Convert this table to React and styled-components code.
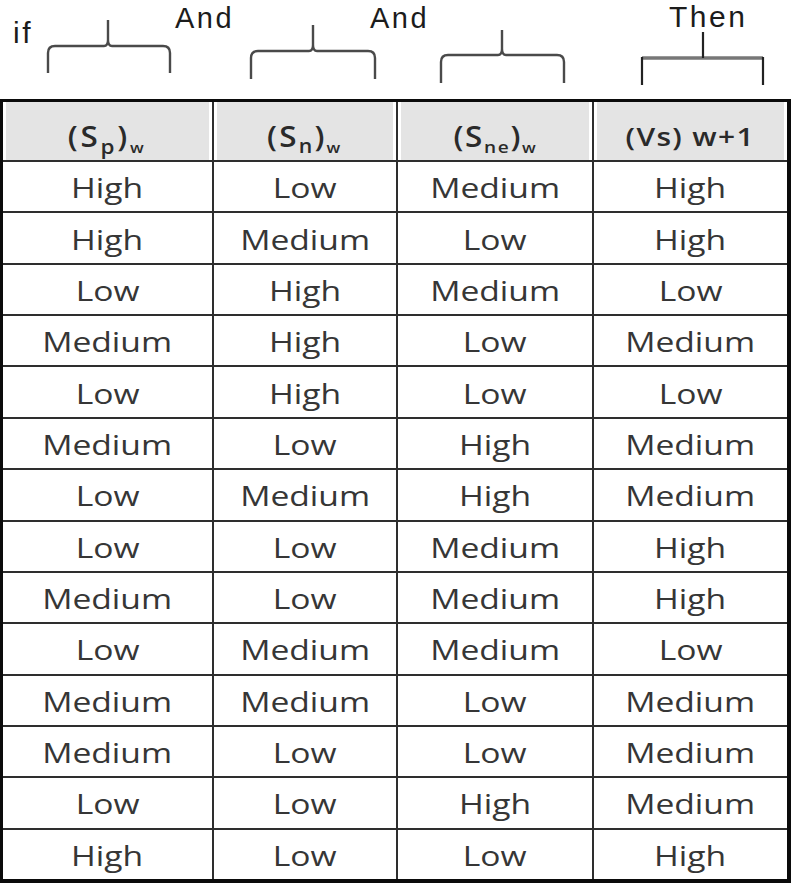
import styled, { createGlobalStyle } from 'styled-components';

const GlobalStyle = createGlobalStyle`
	body {
		margin: 0;
		background: #ffffff;
		font-family: 'Open Sans', 'Liberation Sans', sans-serif;
	}
`;

const ROWS = [
	['High', 'Low', 'Medium', 'High'],
	['High', 'Medium', 'Low', 'High'],
	['Low', 'High', 'Medium', 'Low'],
	['Medium', 'High', 'Low', 'Medium'],
	['Low', 'High', 'Low', 'Low'],
	['Medium', 'Low', 'High', 'Medium'],
	['Low', 'Medium', 'High', 'Medium'],
	['Low', 'Low', 'Medium', 'High'],
	['Medium', 'Low', 'Medium', 'High'],
	['Low', 'Medium', 'Medium', 'Low'],
	['Medium', 'Medium', 'Low', 'Medium'],
	['Medium', 'Low', 'Low', 'Medium'],
	['Low', 'Low', 'High', 'Medium'],
	['High', 'Low', 'Low', 'High'],
];

// curly braces over the first three columns: [left, right, top, tip, bottom, centre]
const BRACES = [
	[48, 170, 46, 20, 73, 108],
	[251, 375, 51, 25, 79, 313],
	[441, 564, 55, 30, 83, 502],
];

const LABELS = [
	{ text: 'if', x: 13, y: 16, size: 30 },
	{ text: 'And', x: 175, y: 2, size: 29 },
	{ text: 'And', x: 370, y: 2, size: 29 },
	{ text: 'Then', x: 669, y: 0, size: 30 },
];

const Page = styled.div`
	width: 795px;
	height: 884px;
	overflow: hidden;
`;

const Annotations = styled.div`
	position: relative;
	height: 99px;
`;

const BraceLayer = styled.svg`
	position: absolute;
	inset: 0;
`;

const Label = styled.span`
	position: absolute;
	left: ${({ $x }) => $x}px;
	top: ${({ $y }) => $y}px;
	font-family: 'Liberation Sans', Arial, sans-serif;
	font-size: ${({ $size }) => $size}px;
	letter-spacing: 2.5px;
	color: #1c1c1c;
`;

const Table = styled.div`
	display: grid;
	grid-template-columns: 209px 182px 194px 193px;
	grid-template-rows: 58px repeat(14, 1fr);
	gap: 2px;
	width: 791px;
	height: 784px;
	box-sizing: border-box;
	background: #2e2e2e;
	border: 3px solid #0b0b0b;
	border-right-width: 4px;
	border-bottom-width: 4px;
`;

const Cell = styled.div`
	display: flex;
	align-items: center;
	justify-content: center;
	background: #ffffff;
	color: #363636;
	font-size: 28px;
	padding-top: 1px;
`;

const HeadCell = styled(Cell)`
	background: #e4e4e4;
	box-shadow: inset 3px 0 #ffffff, inset -3px 0 #ffffff;
	color: #2a2a2a;
	font-weight: 600;
	font-size: ${({ $size }) => $size || 28}px;
	padding-top: 9px;
`;

const Stretch = styled.span`
	display: inline-block;
	transform: scaleX(${({ $scale }) => $scale || 1.2});
	letter-spacing: ${({ $spacing }) => $spacing || 0}px;
	white-space: nowrap;
`;

const Sub = styled.sub`
	font-size: ${({ $size }) => $size}px;
	vertical-align: ${({ $drop }) => -$drop}px;
	line-height: 0;
`;

const Brace = ({ l, r, t, tip, b, c }) => (
	<path
		d={`M${l},${b} L${l},${t + 7} Q${l},${t} ${l + 7},${t} L${c - 4},${t} Q${c},${t} ${c},${t - 6} L${c},${tip} M${c},${t - 6} Q${c},${t} ${c + 4},${t} L${r - 7},${t} Q${r},${t} ${r},${t + 7} L${r},${b}`}
		fill="none"
		stroke="#4a4a4a"
		strokeWidth="2.4"
	/>
);

export default function App() {
	return (
		<Page>
			<GlobalStyle />
			<Annotations>
				<BraceLayer width="795" height="99" viewBox="0 0 795 99">
					{BRACES.map(([l, r, t, tip, b, c]) => (
						<Brace key={l} l={l} r={r} t={t} tip={tip} b={b} c={c} />
					))}
					<path d="M642,58 L763,58" stroke="#777" strokeWidth="3.5" />
					<path
						d="M642,57 L642,85 M763,57 L763,85 M703,32 L703,58"
						stroke="#222"
						strokeWidth="2.2"
						fill="none"
					/>
				</BraceLayer>
				{LABELS.map((label) => (
					<Label key={label.x} $x={label.x} $y={label.y} $size={label.size}>
						{label.text}
					</Label>
				))}
			</Annotations>
			<Table>
				<HeadCell>
					<Stretch $scale={1.12} $spacing={2.5}>
						(S<Sub $size={20} $drop={7}>p</Sub>)<Sub $size={15} $drop={6}>w</Sub>
					</Stretch>
				</HeadCell>
				<HeadCell>
					<Stretch $scale={1.12} $spacing={2}>
						(S<Sub $size={19} $drop={6}>n</Sub>)<Sub $size={15} $drop={6}>w</Sub>
					</Stretch>
				</HeadCell>
				<HeadCell>
					<Stretch $scale={1.12} $spacing={1.5}>
						(S<Sub $size={17} $drop={6}>ne</Sub>)<Sub $size={15} $drop={6}>w</Sub>
					</Stretch>
				</HeadCell>
				<HeadCell $size={26}>
					<Stretch $scale={1.15} $spacing={1.2}>
						(Vs) w+1
					</Stretch>
				</HeadCell>
				{ROWS.map((row, i) =>
					row.map((value, j) => (
						<Cell key={`${i}-${j}`}>
							<Stretch>{value}</Stretch>
						</Cell>
					)),
				)}
			</Table>
		</Page>
	);
}
